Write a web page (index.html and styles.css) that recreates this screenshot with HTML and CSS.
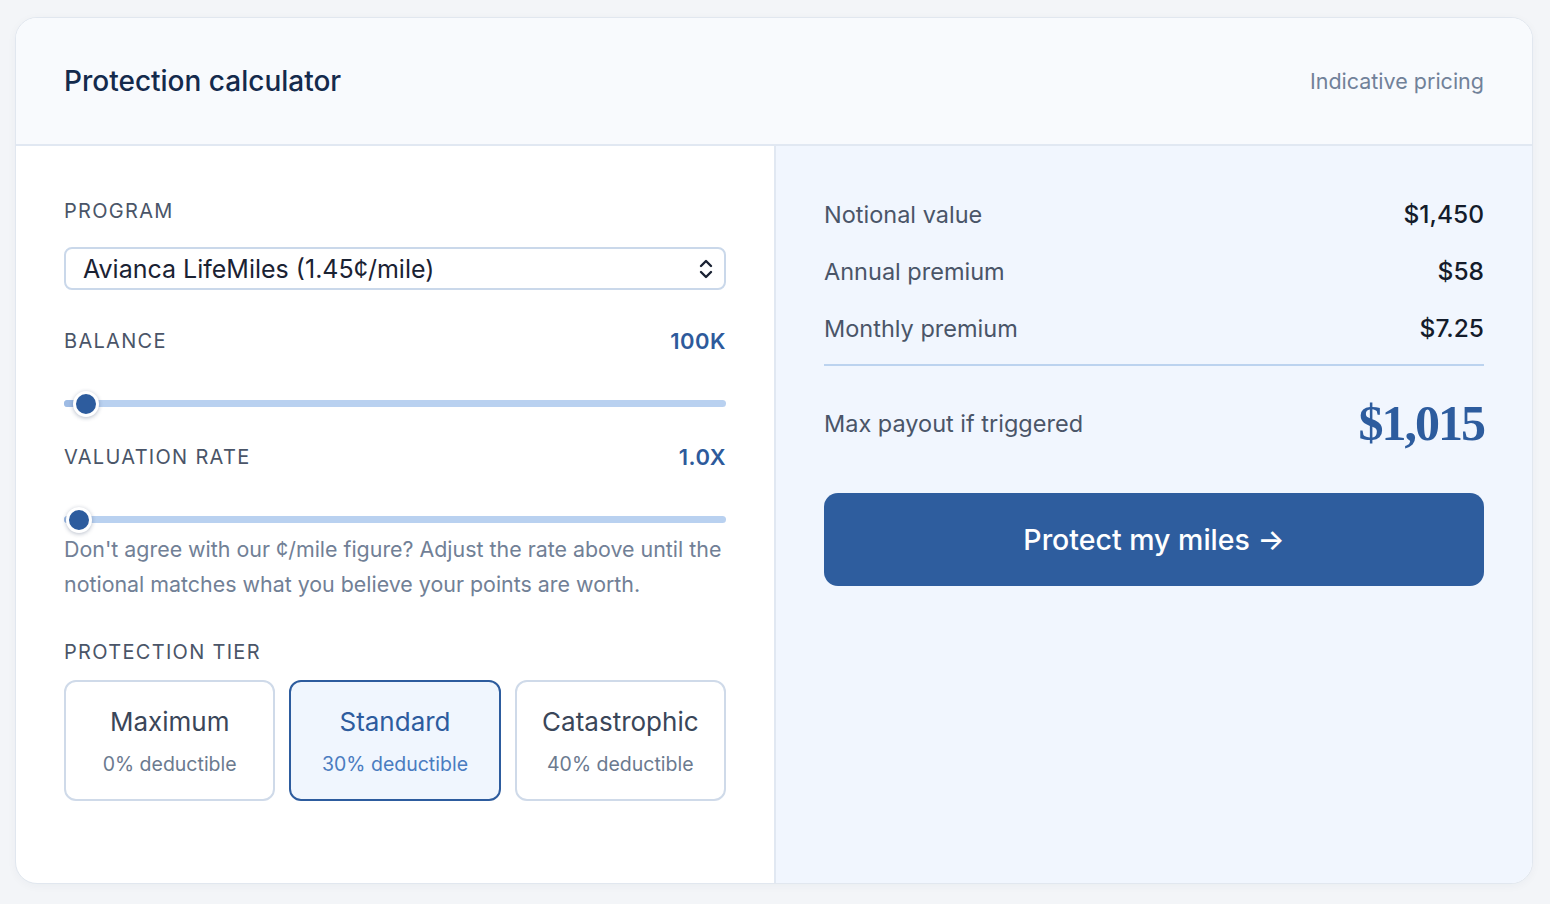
FILE: index.html
```html
<!DOCTYPE html>
<html lang="en">
<head>
    <meta charset="UTF-8">
    <meta name="viewport" content="width=device-width, initial-scale=1.0">
    <title>Protection calculator</title>
    <link rel="stylesheet" href="styles.css">
</head>
<body>

    <div class="card">
        <div class="card-head">
            <h2>Protection calculator</h2>
            <span class="note">Indicative pricing</span>
        </div>

        <div class="card-body">
            <div class="inputs">
                <label class="field-label">PROGRAM</label>
                <div class="select">
                    <span>Avianca LifeMiles (1.45¢/mile)</span>
                    <svg width="16" height="24" viewBox="0 0 16 24">
                        <path d="M3 9 L8 4 L13 9 M3 15 L8 20 L13 15" fill="none" stroke="#1a2233" stroke-width="2.4" stroke-linecap="round" stroke-linejoin="round"/>
                    </svg>
                </div>

                <div class="field-row">
                    <label class="field-label">BALANCE</label>
                    <span class="field-value">100K</span>
                </div>
                <div class="slider">
                    <div class="fill" style="width: 22px"></div>
                    <div class="thumb" style="left: 22px"></div>
                </div>

                <div class="field-row">
                    <label class="field-label">VALUATION RATE</label>
                    <span class="field-value">1.0X</span>
                </div>
                <div class="slider">
                    <div class="fill" style="width: 15px"></div>
                    <div class="thumb" style="left: 15px"></div>
                </div>
                <p class="help">Don't agree with our ¢/mile figure? Adjust the rate above until the notional matches what you believe your points are worth.</p>

                <label class="field-label tier-label">PROTECTION TIER</label>
                <div class="tiers">
                    <div class="tier">
                        <div class="tier-name">Maximum</div>
                        <div class="tier-sub">0% deductible</div>
                    </div>
                    <div class="tier active">
                        <div class="tier-name">Standard</div>
                        <div class="tier-sub">30% deductible</div>
                    </div>
                    <div class="tier">
                        <div class="tier-name">Catastrophic</div>
                        <div class="tier-sub">40% deductible</div>
                    </div>
                </div>
            </div>

            <div class="summary">
                <div class="line">
                    <span>Notional value</span>
                    <strong>$1,450</strong>
                </div>
                <div class="line">
                    <span>Annual premium</span>
                    <strong>$58</strong>
                </div>
                <div class="line">
                    <span>Monthly premium</span>
                    <strong>$7.25</strong>
                </div>
                <div class="payout">
                    <span>Max payout if triggered</span>
                    <strong>$1,015</strong>
                </div>
                <button>Protect my miles →</button>
            </div>
        </div>
    </div>

</body>
</html>
```

FILE: styles.css
```css
body {
    font-family: Inter, "Noto Sans", sans-serif;
    margin: 0;
    padding: 17px 17px 21px 15px;
    background-color: #f3f5f8;
    color: #1a2233;
}
.card {
    border: 1px solid #e1e7ef;
    border-radius: 22px;
    overflow: hidden;
    background: #ffffff;
    box-shadow: 0 2px 10px rgba(30, 50, 80, 0.04);
}
.card-head {
    display: flex;
    justify-content: space-between;
    align-items: center;
    height: 126px;
    padding: 0 48px;
    background-color: #f8fafd;
    border-bottom: 2px solid #e1e8f2;
}
.card-head h2 {
    margin: 0;
    font-size: 28px;
    font-weight: 500;
    color: #142a4c;
}
.note {
    font-size: 21.5px;
    color: #718199;
}
.card-body {
    display: grid;
    grid-template-columns: 760px 1fr;
    height: 737px;
}
.inputs {
    padding: 48px 48px 0 48px;
    border-right: 2px solid #e1e8f2;
}
.field-label {
    display: block;
    font-size: 20px;
    letter-spacing: 1.3px;
    color: #4a5568;
    line-height: 34px;
}
.select {
    display: flex;
    justify-content: space-between;
    align-items: center;
    height: 39px;
    margin-top: 19px;
    padding: 0 10px 0 17px;
    border: 2px solid #cad8ea;
    border-radius: 8px;
    font-size: 25px;
    color: #1a2233;
}
.field-row {
    display: flex;
    justify-content: space-between;
    align-items: center;
    margin-top: 34px;
}
.slider + .field-row {
    margin-top: 33px;
}
.field-value {
    font-size: 22px;
    font-weight: 600;
    color: #2d5a9b;
    letter-spacing: 0.5px;
}
.slider {
    position: relative;
    height: 7px;
    margin-top: 42px;
    border-radius: 4px;
    background-color: #b9d1f0;
}
.slider .fill {
    height: 7px;
    border-radius: 4px;
    background-color: #9ebbe4;
}
.slider .thumb {
    position: absolute;
    top: 50%;
    width: 20px;
    height: 20px;
    border: 3px solid #ffffff;
    border-radius: 50%;
    background-color: #2d5c9e;
    transform: translate(-50%, -50%);
    box-shadow: 0 1px 4px rgba(20, 40, 80, 0.3);
}
.help {
    margin: 9px 0 0 0;
    font-size: 21.4px;
    line-height: 35px;
    color: #718096;
}
.tier-label {
    margin-top: 33px;
}
.tiers {
    display: grid;
    grid-template-columns: repeat(3, 1fr);
    gap: 14px;
    margin-top: 11px;
}
.tier {
    box-sizing: border-box;
    height: 121px;
    padding-top: 24px;
    border: 2px solid #cfdae9;
    border-radius: 12px;
    text-align: center;
}
.tier-name {
    font-size: 26px;
    color: #3a4659;
}
.tier-sub {
    margin-top: 15px;
    font-size: 19.5px;
    color: #6b7a8f;
}
.tier.active {
    border-color: #2d5c9e;
    background-color: #f0f6fe;
}
.tier.active .tier-name {
    color: #2d5c9e;
}
.tier.active .tier-sub {
    color: #4a7cc0;
}
.summary {
    padding: 51px 48px 0 48px;
    background-color: #f1f6fe;
}
.line {
    display: flex;
    justify-content: space-between;
    align-items: center;
    height: 34px;
    margin-bottom: 23px;
    font-size: 23.5px;
}
.line span, .payout span {
    color: #4a5568;
}
.line strong {
    font-weight: 500;
    color: #141c2b;
    font-size: 24.5px;
}
.payout {
    display: flex;
    justify-content: space-between;
    align-items: center;
    margin-top: -4px;
    padding-top: 28px;
    border-top: 2px solid #bcd3ef;
    font-size: 23.5px;
}
.payout strong {
    font-family: "Liberation Serif", serif;
    font-size: 50px;
    font-weight: bold;
    color: #2d5c9e;
    letter-spacing: -2px;
}
button {
    width: 100%;
    height: 93px;
    margin-top: 41px;
    border: none;
    border-radius: 14px;
    background-color: #2e5d9e;
    color: white;
    font-family: inherit;
    font-size: 28.5px;
    font-weight: 500;
    cursor: pointer;
}
button:hover {
    background-color: #264f88;
}
```
